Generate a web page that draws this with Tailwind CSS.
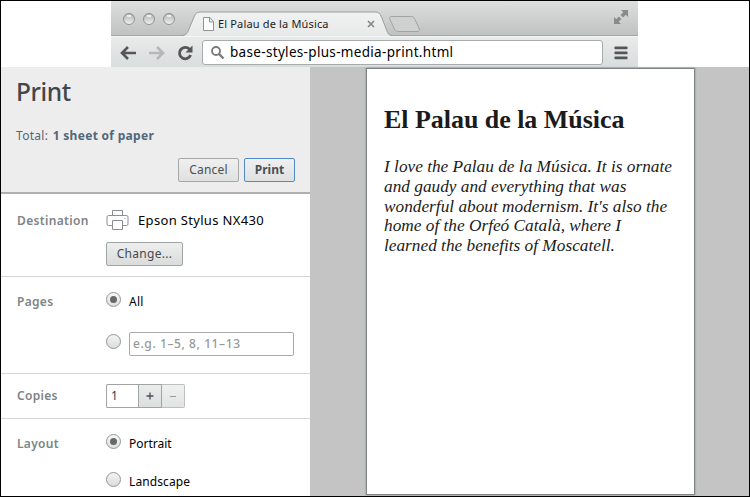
<!DOCTYPE html>
<html lang="en">
<head>
<meta charset="utf-8">
<title>El Palau de la Música</title>
<script src="https://cdn.jsdelivr.net/npm/@tailwindcss/browser@4"></script>
</head>
<body class="bg-white">
<div class="flex h-[497px] w-[750px] flex-col overflow-hidden border border-black bg-white font-['Noto_Sans','Open_Sans',sans-serif] text-[13px] text-[#1c1c1c]">
  <!-- Browser chrome -->
  <header class="ml-[110px] h-[66px] w-[527px] shrink-0 bg-[#e4e6e6]">
    <div class="relative flex h-[35px] items-start bg-linear-to-b from-[#dedfdf] to-[#bfc1c1]">
      <svg class="absolute inset-0" width="527" height="35" viewBox="0 0 527 35" fill="none">
        <defs>
          <linearGradient id="tab" x1="0" y1="0" x2="0" y2="1"><stop stop-color="#f0f1f1"/><stop offset="1" stop-color="#e8eaea"/></linearGradient>
          <linearGradient id="bead" x1="0" y1="0" x2="0" y2="1"><stop stop-color="#a7a9a9"/><stop offset=".5" stop-color="#cfd1d1"/><stop offset="1" stop-color="#f3f3f3"/></linearGradient>
        </defs>
        <path d="M0 34.5H527" stroke="#a2a5a6"/>
        <path d="M71 35C75.500 34.500 76.500 32 78 28L83 16C84.500 12.500 85.500 11 89 11H264C268 11 269 12.500 270.500 16L276 30C277 33 278 34.500 281 35Z" fill="url(#tab)"/>
        <path d="M71 34.500C75.500 34 76.500 32 78 28L83 16C84.500 12.500 85.500 11 89 11H264C268 11 269 12.500 270.500 16L276 30C277 33 278 34 281 34.500" stroke="#9a9d9e"/>
        <path d="M280.500 15.500H299.500C302 15.500 303 16 304 18.500L308 27C309 29.500 308 30.500 306 30.500H288C285 30.500 284 29.500 283 27L279 18.500C278 16.500 278.500 15.500 280.500 15.500Z" fill="#cfd1d1" stroke="#a1a4a5"/>
        <g fill="url(#bead)" stroke="#8f9192"><circle cx="18" cy="18" r="5.500"/><circle cx="38" cy="18" r="5.500"/><circle cx="58" cy="18" r="5.500"/></g>
        <g fill="#ededed"><ellipse cx="18" cy="15" rx="2.500" ry="1.300"/><ellipse cx="38" cy="15" rx="2.500" ry="1.300"/><ellipse cx="58" cy="15" rx="2.500" ry="1.300"/></g>
        <path d="M92.500 16.500H99L102.500 20.500V29.500H92.500ZM98.500 16.500V21H102.500" fill="#fff" stroke="#8f9293"/>
        <path d="M257 20L263 26M263 20L257 26" stroke="#868889" stroke-width="1.700"/>
        <path d="M510 9H517V16L514.700 13.700L512 16.400L509.600 14L512.300 11.300ZM503 23V16L505.300 18.300L508 15.600L510.400 18L507.700 20.700L510 23Z" fill="#898b8b"/>
      </svg>
      <span class="relative ml-[107px] mt-[15px] whitespace-nowrap text-[11px] leading-4 tracking-[0.16px]">El Palau de la Música</span>
    </div>
    <div class="flex h-[31px] items-center border-t border-[#f4f5f5] bg-linear-to-b from-[#e9ebeb] to-[#dadddd] pl-2 pt-px">
      <svg class="shrink-0" width="78" height="18" viewBox="0 0 78 18" fill="none" stroke-width="2.600">
        <path d="M17 9H3.500M9 3L3 9L9 15" stroke="#545657"/>
        <path d="M30 9H43.500M38 3L44 9L38 15" stroke="#b5b8b8"/>
        <path d="M70.500 5.300A5.700 5.700 0 1 0 71.600 11" stroke="#545657" stroke-width="2.800"/>
        <path d="M73.500 1.500V8.500H66.500Z" fill="#545657"/>
      </svg>
      <div class="ml-[5px] flex h-[25px] w-[401px] shrink-0 items-center rounded-[3px] border border-[#a8abac] bg-white pl-[7px]">
        <svg width="16" height="16" viewBox="0 0 16 16" fill="none" stroke="#777a7b"><circle cx="6" cy="6" r="4" stroke-width="1.800"/><path d="M9 9L13.500 13.500" stroke-width="2.400"/></svg>
        <span class="ml-[4px] whitespace-nowrap text-[13.500px] tracking-[0.32px] text-black">base-styles-plus-media-print.html</span>
      </div>
      <svg class="ml-[11px] shrink-0" width="14" height="14" viewBox="0 0 14 14"><g fill="#545657"><rect x="0.500" y="0.500" width="13" height="2.800" rx="0.800"/><rect x="0.500" y="5.500" width="13" height="2.800" rx="0.800"/><rect x="0.500" y="10.500" width="13" height="2.800" rx="0.800"/></g></svg>
    </div>
  </header>

  <div class="flex min-h-0 flex-1">
    <!-- Print settings -->
    <aside class="flex w-[309px] shrink-0 flex-col bg-white">
      <div class="flex h-[127px] shrink-0 flex-col border-b-2 border-[#acb0b3] bg-[#ededed] pl-[15px] pr-[15px]">
        <h1 class="mt-[9px] text-[24.500px] font-medium leading-8 tracking-[-0.4px] text-[#41464b]">Print</h1>
        <p class="mt-[18px] whitespace-nowrap text-[12px] leading-5 tracking-[0.3px] text-[#52677a]">Total: <b class="ml-[1px] font-bold">1 sheet of paper</b></p>
        <div class="mt-[12px] flex justify-end gap-[5px] text-[#4b5054]">
          <button class="h-6 w-[61px] rounded-[2px] border border-[#a4a8a9] bg-linear-to-b from-[#f0f0f0] to-[#dfe0e0] text-[12px] leading-none tracking-[0.2px]">Cancel</button>
          <button class="h-6 w-[51px] rounded-[2px] border border-[#4f8cc6] bg-linear-to-b from-[#f0f0f0] to-[#dfe0e0] text-[12px] font-bold leading-none">Print</button>
        </div>
      </div>
      <section class="flex h-[83px] shrink-0 border-b border-[#d2d5d5] pl-[16px]">
        <h2 class="w-[89px] pt-[17px] text-[12px] font-semibold leading-5 tracking-[0.35px] text-[#7d8487]">Destination</h2>
        <div>
          <div class="mt-[14px] flex h-[24px] items-center">
            <svg width="23" height="22" viewBox="0 0 23 22" fill="#fff" stroke="#8b8e90"><path d="M6.500 7V1.500H16.500V7"/><rect x="1" y="6.500" width="21" height="10" rx="1.500"/><path d="M6.500 11.500H16.500V20.500H6.500Z"/><path d="M18.500 9.500H19.500"/></svg>
            <span class="ml-[9px] translate-y-px whitespace-nowrap text-[13px] tracking-[0.33px] text-black">Epson Stylus NX430</span>
          </div>
          <button class="mt-[10px] h-6 w-[77px] rounded-[2px] border border-[#a0a4a5] bg-linear-to-b from-[#eeeeee] to-[#dadcdc] text-[12px] leading-none tracking-[0.3px] text-[#454a4e]">Change...</button>
        </div>
      </section>
      <section class="flex h-[97px] shrink-0 border-b border-[#d2d5d5] pl-[16px]">
        <h2 class="w-[89px] pt-[15px] text-[12px] font-semibold leading-5 tracking-[0.3px] text-[#7d8487]">Pages</h2>
        <div>
          <div class="mt-[14px] flex h-[17px] items-center gap-2">
            <span class="flex size-[15px] items-center justify-center rounded-full border border-[#929596] bg-linear-to-b from-[#f8f8f8] to-[#dfe0e0]"><i class="size-[7px] rounded-full bg-[#666869]"></i></span>
            <span class="translate-y-[2px] text-[12px] tracking-[0.3px] text-black">All</span>
          </div>
          <div class="mt-[24px] flex items-start gap-2">
            <span class="mt-[2px] size-[15px] rounded-full border border-[#929596] bg-linear-to-b from-[#f3f3f3] to-[#dcdddd]"></span>
            <span class="flex h-6 w-[165px] items-center whitespace-nowrap rounded-[2px] border border-[#a8abac] pl-[3px] text-[12px] font-medium tracking-[0.6px] text-[#96999a]">e.g. 1–5, 8, 11–13</span>
          </div>
        </div>
      </section>
      <section class="flex h-[45px] shrink-0 border-b border-[#d2d5d5] pl-[16px]">
        <h2 class="w-[89px] pt-[12px] text-[12px] font-semibold leading-5 tracking-[0.3px] text-[#7d8487]">Copies</h2>
        <div class="mt-[10px] flex h-6 text-[12px] leading-[22px]">
          <span class="w-[32px] rounded-l-[2px] border border-r-0 border-[#a0a4a5] pl-1 text-[#2c3f52]">1</span>
          <span class="flex w-6 items-center justify-center border border-[#a0a4a5] bg-linear-to-b from-[#ebecec] to-[#dcdfdf]"><svg width="8" height="8" viewBox="0 0 8 8"><path d="M0.500 4H7.500M4 0.500V7.500" stroke="#45505a" stroke-width="1.300"/></svg></span>
          <span class="flex w-[23px] items-center justify-center rounded-r-[2px] border border-l-0 border-[#bcbfc0] bg-linear-to-b from-[#efefef] to-[#e2e4e4]"><i class="h-[1px] w-[6px] bg-[#979b9e]"></i></span>
        </div>
      </section>
      <section class="flex min-h-0 flex-1 pl-[16px]">
        <h2 class="w-[89px] pt-[15px] text-[12px] font-semibold leading-5 tracking-[0.3px] text-[#7d8487]">Layout</h2>
        <div class="flex flex-col gap-[21px] pt-[14px] text-[12px] text-black">
          <div class="flex h-[17px] items-center gap-2">
            <span class="flex size-[15px] items-center justify-center rounded-full border border-[#929596] bg-linear-to-b from-[#f8f8f8] to-[#dfe0e0]"><i class="size-[7px] rounded-full bg-[#666869]"></i></span>
            <span class="translate-y-[2px]">Portrait</span>
          </div>
          <div class="flex h-[17px] items-center gap-2">
            <span class="size-[15px] rounded-full border border-[#929596] bg-linear-to-b from-[#f3f3f3] to-[#dcdddd]"></span>
            <span class="translate-y-[2px] tracking-[0.1px]">Landscape</span>
          </div>
        </div>
      </section>
    </aside>

    <!-- Page preview -->
    <main class="flex-1 bg-[#c4c4c4] pl-[56px] pt-px">
      <article class="h-[427px] w-[329px] border border-[#7f8384] bg-white px-[17px] pt-[35px] font-['Liberation_Serif',serif] text-[#1b1b1b] shadow-[0_0_2px_#85898a]">
        <h1 class="whitespace-nowrap text-[26px] font-bold leading-[32px] tracking-[-0.04px]">El Palau de la Música</h1>
        <p class="mt-[21px] whitespace-nowrap text-[17.300px] italic leading-[19.800px]">I love the Palau de la Música. It is ornate<br>and gaudy and everything that was<br>wonderful about modernism. It's also the<br>home of the Orfeó Català, where I<br>learned the benefits of Moscatell.</p>
      </article>
    </main>
  </div>
</div>
</body>
</html>
